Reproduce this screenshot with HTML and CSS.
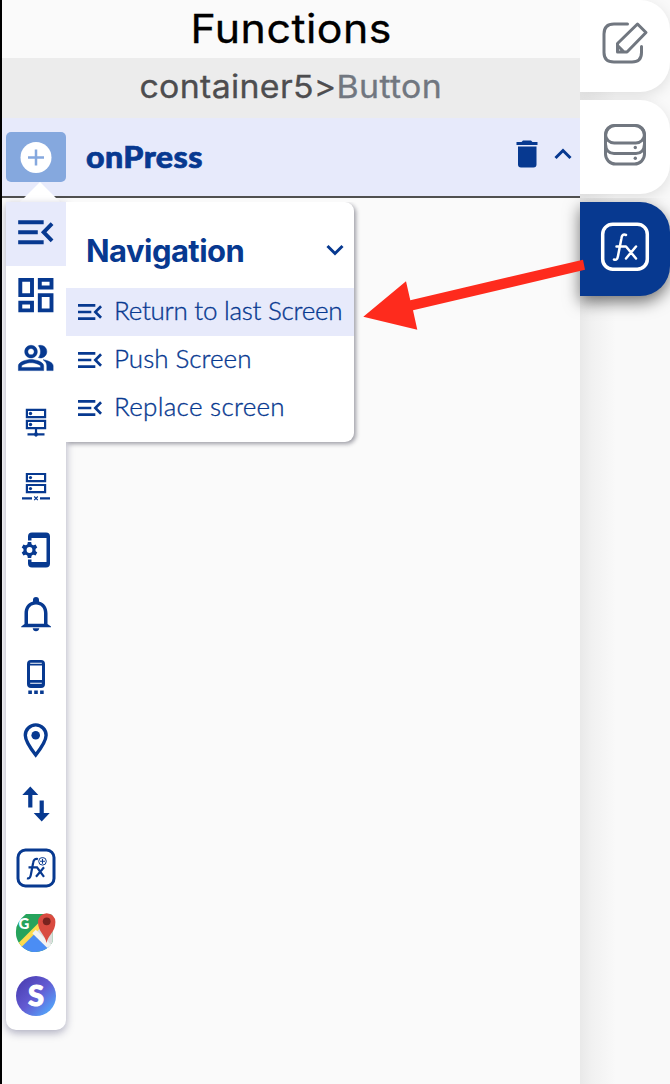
FILE: index.html
```html
<!DOCTYPE html>
<html lang="en">
<head>
<meta charset="utf-8">
<title>Functions</title>
<link rel="stylesheet" href="styles.css">
</head>
<body>
<svg class="defs" aria-hidden="true">
  <symbol id="menu-open" viewBox="3 6 18 12"><path d="M3 18h13v-2H3v2zM3 13h10v-2H3v2zm0-7v2h13V6H3zm18 9.590L17.420 12 21 8.410 19.590 7l-5 5 5 5L21 15.590z"/></symbol>
</svg>
<div class="app">
  <main class="panel">
    <h1 class="title"><span>Functions</span></h1>
    <div class="path"><span>container5&gt;<span class="leaf">Button</span></span></div>
    <div class="event">
      <button class="add"><svg width="32" height="32" viewBox="0 0 32 32"><circle cx="16" cy="16.500" r="15.500" fill="#fff"/><path d="M16 8.500v16M8 16.500h16" stroke="#85a8de" stroke-width="2.500"/></svg></button>
      <span class="event-name">onPress</span>
      <svg class="trash" width="22" height="28" viewBox="0 0 22 28"><path d="M.5 2H5.500L7 .4h8L16.500 2h5v3H.5zM2 6.500h18.500v18q0 3-3 3H5q-3 0-3-3z"/></svg>
      <svg class="chev" width="18" height="12" viewBox="0 0 18 12"><path d="M1.500 10L9 2.500 16.500 10"/></svg>
    </div>
    <div class="popup">
      <nav class="tools">
        <div class="tool active"><svg viewBox="0 0 60 60"><path transform="translate(6.300 6.300) scale(1.960 2)" d="M3 18h13v-2H3v2zM3 13h10v-2H3v2zm0-7v2h13V6H3zm18 9.590L17.420 12 21 8.410 19.590 7l-5 5 5 5L21 15.590z"/></svg></div>
        <div class="tool"><svg viewBox="0 0 60 60"><path transform="translate(6.500 6.300) scale(1.950 1.900)" d="M19 5v2h-4V5h4M9 5v6H5V5h4m10 8v6h-4v-6h4M9 17v2H5v-2h4M21 3h-8v6h8V3zM11 3H3v10h8V3zm10 8h-8v10h8V11zm-10 4H3v6h8v-6z"/></svg></div>
        <div class="tool"><svg viewBox="0 0 60 60"><path stroke="#073990" stroke-width=".3" transform="translate(10.800 10) scale(1.580)" d="M16.670 13.130C18.040 14.060 19 15.320 19 17v3h4v-3c0-2.180-3.570-3.470-6.330-3.870zM15 12c2.210 0 4-1.790 4-4s-1.790-4-4-4c-.47 0-.91.10-1.330.240C14.500 5.270 15 6.580 15 8s-.5 2.730-1.330 3.760c.42.140.86.240 1.330.240zM9 12c2.210 0 4-1.790 4-4s-1.790-4-4-4-4 1.790-4 4 1.790 4 4 4zm0-6c1.100 0 2 .9 2 2s-.9 2-2 2-2-.9-2-2 .9-2 2-2zM9 13c-2.670 0-8 1.340-8 4v3h16v-3c0-2.660-5.330-4-8-4zm6 5H3v-.99C3.200 16.290 6.300 15 9 15s5.800 1.290 6 2z"/></svg></div>
        <div class="tool"><svg viewBox="0 0 60 60"><path class="line" d="M20.900 16.900h18.200v7.200H20.900zM20.900 27.900h18.200v7.200H20.900zM30 35v6M21.500 41.300h17M30 39v4.500"/><circle cx="24.500" cy="20.500" r="1.700"/><circle cx="24.500" cy="31.500" r="1.700"/><circle cx="30" cy="41.300" r="2"/></svg></div>
        <div class="tool"><svg viewBox="0 0 60 60"><path class="line" d="M20.900 17h18.200v7.200H20.900zM20.900 28h18.200v7.200H20.900zM16 41.300h10M34 41.300h10"/><path class="line thin" d="M28.200 39.500l3.600 3.600M31.800 39.500l-3.600 3.600"/><circle cx="24.500" cy="20.600" r="1.600"/><circle cx="24.500" cy="31.600" r="1.600"/></svg></div>
        <div class="tool"><svg viewBox="0 0 60 60"><path d="M22 20.500V16.500q0-4 4-4h14q4 0 4 4v27q0 4-4 4H26q-4 0-4-4v-4h3.500v2.500H40.500v-24H25.500V20.500z"/><g transform="translate(23.500 30)"><circle r="4.500" fill="none" stroke="#073990" stroke-width="3.200"/><path d="M-1.700-8h3.400l.7 4h-4.800zM-1.700 8h3.400l.7-4h-4.800z"/><path transform="rotate(60)" d="M-1.700-8h3.400l.7 4h-4.800zM-1.700 8h3.400l.7-4h-4.800z"/><path transform="rotate(120)" d="M-1.700-8h3.400l.7 4h-4.800zM-1.700 8h3.400l.7-4h-4.800z"/></g></svg></div>
        <div class="tool"><svg viewBox="0 0 60 60"><path fill-rule="evenodd" d="M27 17.500v-1.500a3 3 0 0 1 6 0v1.500c6 1.500 8.500 6.500 8.500 12V40l3.500 2.500v.8H15.200v-.8L18.500 40V29.500c0-5.500 2.500-10.500 8.500-12zM22 39.800H38V29c0-5-3-8.500-8-8.500S22 24 22 29zM26.700 44.300h6.600q-.5 3-3.300 3t-3.300-3z"/></svg></div>
        <div class="tool"><svg viewBox="0 0 60 60"><path fill-rule="evenodd" d="M25 12h10q4 0 4 4V36q0 4-4 4H25q-4 0-4-4V16q0-4 4-4zM24 17.500v14.500h12V17.500zM24.200 14.700h11.600v1H24.200zM24.200 34.700h11.600v1H24.200zM22.300 42.500h3.600v3.400h-3.600zM28.200 42.500h3.600v3.400h-3.600zM34.100 42.500h3.600v3.400h-3.600z"/></svg></div>
        <div class="tool"><svg viewBox="0 0 60 60"><path d="M29.700 44C25 38 19.300 30.500 19.300 24.300a10.400 10.400 0 0 1 20.800 0C40.100 30.500 34.400 38 29.700 44z" fill="none" stroke="#073990" stroke-width="3.400"/><circle cx="29.700" cy="24.300" r="4.300"/></svg></div>
        <div class="tool"><svg viewBox="0 0 60 60"><path d="M24.300 11.600l8 8.300h-5.900V32.600h-4.200V19.900h-5.900zM35.700 46.400l8-8.300h-5.900V25.400h-4.200v12.700h-5.900z"/></svg></div>
        <div class="tool"><svg viewBox="0 0 60 60"><rect x="12" y="11" width="36" height="36" rx="7.500" fill="none" stroke="#073990" stroke-width="3"/><path class="line fx" d="M21 39.200c2.300.8 3.300-.7 3.800-3.200l2.400-12.500c.5-3 2.200-4.300 4.700-3.400M22.500 28.300h8.500l7 9.500M38 28.300l-8 9.500"/><circle cx="36.500" cy="22.300" r="3.800" fill="none" stroke="#073990"/><path d="M36.500 19.800v5M34 22.300h5" stroke="#073990" stroke-width="1.100"/></svg></div>
        <div class="tool"><svg viewBox="0 0 60 60"><defs><clipPath id="map"><path d="M20 12h24q2.500 0 2.500 3v25A19.500 19.500 0 0 1 10 29q0-9 10-17z"/></clipPath></defs><g clip-path="url(#map)"><path fill="#26a35c" d="M9 10h40v40H9z"/><path fill="#ddd" d="M28 29L48 9v40z"/><path fill="#4b8df4" d="M13 46L29 30 49 51H12z"/><path d="M10 47L38 19" stroke="#fddb4f" stroke-width="5"/><path d="M28 29.500L49 50" stroke="#f2f2f2" stroke-width="5"/></g><path fill="#d94b40" d="M40.500 41C39.500 33 32 30 32 20a8.700 8.700 0 0 1 17.400 0C49.400 30 42 33 40.500 41z"/><circle cx="40.700" cy="19.300" r="3.900" fill="#79231f"/><text x="12.500" y="27" class="g">G</text></svg></div>
        <div class="tool"><svg viewBox="0 0 60 60"><defs><linearGradient id="sg" x1="0" y1="0" x2="1" y2="1"><stop stop-color="#4438ac"/><stop offset=".5" stop-color="#635bd2"/><stop offset=".8" stop-color="#5794f2"/><stop offset="1" stop-color="#51c6f8"/></linearGradient></defs><circle cx="30" cy="30" r="20" fill="url(#sg)"/><text x="30" y="40" class="s">S</text></svg></div>
      </nav>
      <section class="menu">
        <h2 class="menu-title"><span>Navigation</span><svg class="chev" width="18" height="12" viewBox="0 0 18 12"><path d="M1.500 2L9 9.500 16.500 2"/></svg></h2>
        <div class="item active"><svg><use href="#menu-open"/></svg><span class="i1">Return to last Screen</span></div>
        <div class="item"><svg><use href="#menu-open"/></svg><span class="i2">Push Screen</span></div>
        <div class="item"><svg><use href="#menu-open"/></svg><span class="i3">Replace screen</span></div>
      </section>
    </div>
  </main>
  <aside class="rail">
    <div class="tab first"><svg width="90" height="92" viewBox="0 0 90 92"><path d="M47.500 24H34Q24 24 24 34V52.500Q24 62 34 62H52Q61.500 62 61.500 52.500V46.500M47 52H37.500V43.500L57.500 24 66 32.500zM38 46l6 6"/></svg></div>
    <div class="tab"><svg width="90" height="94" viewBox="0 0 90 94"><rect x="25.500" y="25.500" width="39" height="38.500" rx="10"/><rect x="25.500" y="25.500" width="39" height="17.500" rx="8.700"/><path d="M25.500 44Q26 53.500 34 53.500H56Q64 53.500 64.500 44"/><circle class="dot" cx="55.300" cy="47.500" r="1.700"/><circle class="dot" cx="55.300" cy="58.300" r="1.700"/></svg></div>
    <div class="tab current"><svg width="90" height="94" viewBox="0 0 90 94"><rect x="22.700" y="22.200" width="44.600" height="45" rx="10" stroke-width="3.500"/><path stroke-width="2.500" d="M34 57.500c2.500 1 3.400-.5 4-3.500l3.300-17c.5-4 2-5.200 4.700-4M36.500 44.500H46l10 12M56 44.500l-10 12"/></svg></div>
  </aside>
  <svg class="arrow" viewBox="0 0 670 1084"><path d="M363.300 316.700L406 281.300 410.300 300.300 583 259.700 585 269.700 413 310.300 417.300 329.700z"/></svg>
</div>
</body>
</html>
```
FILE: styles.css
```css
* { box-sizing: border-box; }
body { margin: 0; }
.defs { position: absolute; width: 0; height: 0; }
.app { position: relative; display: flex; width: 670px; height: 1084px; overflow: hidden; background: #fafafa; font-family: Lato, "Open Sans", sans-serif; }
.panel { position: relative; width: 580px; height: 1084px; border-left: 2px solid #000; background: #fafafa; }
.title, .path { margin: 0; display: flex; align-items: center; justify-content: center; font-family: Inter, sans-serif; white-space: nowrap; }
.title { height: 58px; padding-bottom: 2px; font-size: 40px; font-weight: 400; color: #000; letter-spacing: .5px; }
.title > span { transform: scaleX(1.07); -webkit-text-stroke: .3px; }
.path { height: 60px; padding-bottom: 3px; background: #ececec; color: #4d4d4f; font-size: 31.500px; letter-spacing: .3px; }
.path > span { transform: scaleX(1.075); -webkit-text-stroke: .3px; }
.leaf { color: #717780; }
.event { height: 80px; display: flex; align-items: center; padding: 0 8px 0 4px; background: #e7eafb; border-bottom: 2px solid #505050; }
.add { width: 60px; height: 50px; padding: 0; border: 0; border-radius: 5px; background: #85a8de; display: flex; align-items: center; justify-content: center; }
.event-name { flex: 1; margin-left: 20px; padding-bottom: 2px; font-size: 30.500px; font-weight: 900; color: #073990; letter-spacing: .4px; -webkit-text-stroke: .7px #073990; }
.event-name { transform: scaleX(1.055); transform-origin: left; }
.trash { fill: #073990; margin: 0 16px 6px 0; }
.chev { fill: none; stroke: #073990; stroke-width: 3; }
.event .chev { margin-bottom: 6px; }
.popup { position: absolute; left: 4px; top: 202px; display: flex; align-items: flex-start; }
.popup::before { content: ""; position: absolute; left: 14px; top: -20px; border: 20px solid transparent; border-top: 0; border-bottom-color: #fff; }
.tools { position: relative; display: grid; grid-template-rows: repeat(13, 1fr); width: 60px; height: 828px; border-radius: 0 0 10px 10px; background: #fff; box-shadow: 0 3px 8px rgba(30, 30, 80, .35); }
.tool { display: flex; justify-content: center; padding-bottom: 4px; align-items: center; min-height: 0; fill: #073990; }
.tool svg { width: 60px; height: 60px; flex: none; }
.tool.active, .item.active { background: #e7eafb; }
.line { fill: none; stroke: #073990; stroke-width: 2.200; }
.thin { stroke-width: 1.200; }
.g { font: 900 15px Lato, sans-serif; fill: #fff; }
.s { font: 900 29px Lato, sans-serif; fill: #fff; stroke: #fff; stroke-width: 1; text-anchor: middle; }
.menu { position: relative; width: 288px; height: 240px; background: #fff; border-radius: 0 9px 9px 0; box-shadow: 2px 2px 4px rgba(20, 20, 40, .4); clip-path: inset(0 -10px -10px 0); }
.menu-title { display: flex; align-items: center; justify-content: space-between; height: 86px; margin: 0; padding: 10px 10px 0 20px; font: 700 31px Inter, sans-serif; letter-spacing: -.55px; color: #073990; }
.item { height: 48px; display: flex; align-items: center; padding-left: 12px; gap: 12px; font-size: 26px; color: #073990; white-space: nowrap; }
.item svg { width: 24px; height: 16px; fill: #073990; flex: none; }
.item span { padding-bottom: 4px; font-weight: 300; -webkit-text-stroke: .35px #073990; }
.item .i1 { letter-spacing: -.27px; }
.item .i3 { letter-spacing: .28px; }
.rail { position: relative; width: 90px; height: 1084px; display: flex; flex-direction: column; gap: 8px; background: linear-gradient(90deg, #e9e9e9, #f1f1f1 12px, #f9f9f9 36px); }
.tab { height: 94px; flex: none; background: #fff; border-radius: 0 30px 30px 0; box-shadow: 0 4px 14px rgba(0, 0, 0, .1); clip-path: inset(-20px -20px -20px 0); }
.tab.first { height: 92px; }
.tab svg { display: block; fill: none; stroke: #717780; stroke-width: 3; stroke-linecap: round; stroke-linejoin: round; }
.tab .dot { fill: #717780; stroke: none; }
.tab.current { background: #073990; box-shadow: 0 6px 16px rgba(0, 0, 0, .55); clip-path: inset(-4px -20px -40px -30px); }
.tab.current svg { stroke: #fff; }
.arrow { position: absolute; left: 0; top: 0; width: 670px; height: 1084px; fill: #fe2b1d; pointer-events: none; }
```
